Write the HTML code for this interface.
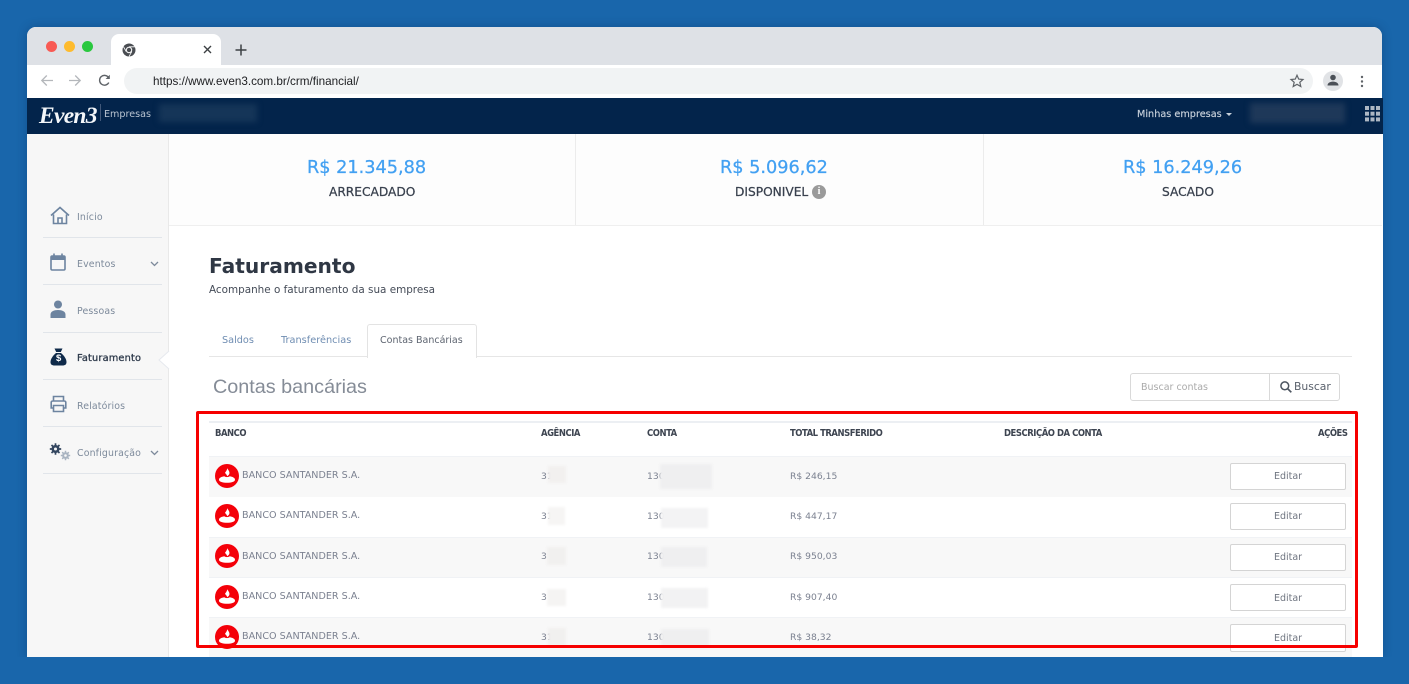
<!DOCTYPE html>
<html lang="pt-BR">
<head>
<meta charset="utf-8">
<title>Even3 - Faturamento</title>
<style>
html,body{margin:0;padding:0;width:1409px;height:684px;overflow:hidden;background:#1966ab;font-family:"DejaVu Sans","Liberation Sans",sans-serif;}
.a{position:absolute;white-space:nowrap;line-height:1;}
.b{position:absolute;}
.side{font-size:9.4px;color:#7d8a9b;letter-spacing:.15px;}
.hd{font-size:9.4px;font-weight:bold;color:#3d4450;letter-spacing:-.45px;font-family:"DejaVu Sans Condensed","DejaVu Sans",sans-serif;}
.cell{font-size:9.2px;color:#7b8190;}
.bank{font-size:9.6px;color:#7b8190;}
.stat{font-size:17.7px;color:#42a0f2;-webkit-text-stroke:.25px #42a0f2;}
.lab{font-size:12.2px;color:#39414e;-webkit-text-stroke:.25px #39414e;}
.btn{position:absolute;left:1230px;width:114px;height:25px;background:#fff;border:1px solid #d4d4d4;border-radius:2px;font-size:9.5px;color:#6f7580;text-align:center;line-height:26px;}
.blur{position:absolute;filter:blur(1.2px);}
.line{position:absolute;left:43px;width:119px;height:1px;background:#e1e5ea;}
svg{position:absolute;overflow:visible;}
</style>
</head>
<body>
<!-- window -->
<div class="b" style="left:27px;top:27px;width:1355px;height:630px;background:#fff;border-radius:9px 9px 0 0;box-shadow:0 0 10px rgba(0,30,70,.28);overflow:hidden;"></div>
<div class="b" style="left:27px;top:27px;width:1355px;height:38px;background:#dee1e6;border-radius:9px 9px 0 0;"></div>
<div class="b" style="left:46px;top:41px;width:11px;height:11px;border-radius:50%;background:#f85a54;"></div>
<div class="b" style="left:64px;top:41px;width:11px;height:11px;border-radius:50%;background:#febb2e;"></div>
<div class="b" style="left:82px;top:41px;width:11px;height:11px;border-radius:50%;background:#2ac83f;"></div>
<!-- tab -->
<div class="b" style="left:111px;top:34px;width:110px;height:31px;background:#fff;border-radius:8px 8px 0 0;"></div>
<svg style="left:122px;top:43px" width="14" height="14" viewBox="0 0 14 14"><circle cx="7" cy="7" r="6.5" fill="#4a4d52"/><circle cx="7" cy="7" r="3.2" fill="#fff"/><circle cx="7" cy="7" r="2.2" fill="#4a4d52"/><path d="M7 3.8H13M4.2 8.6L1.4 3.6M9.8 8.6L7 13.4" stroke="#fff" stroke-width=".8"/></svg>
<svg style="left:203px;top:45px" width="9" height="9" viewBox="0 0 9 9"><path d="M1 1L8 8M8 1L1 8" stroke="#3c4043" stroke-width="1.4"/></svg>
<svg style="left:235px;top:44px" width="12" height="12" viewBox="0 0 12 12"><path d="M6 .5V11.5M.5 6H11.5" stroke="#3c4043" stroke-width="1.5"/></svg>
<!-- toolbar -->
<svg style="left:40px;top:74px" width="14" height="13" viewBox="0 0 14 13"><path d="M13 6.5H2M6.8 1.5L1.8 6.5L6.8 11.5" fill="none" stroke="#b4b7bb" stroke-width="1.3"/></svg>
<svg style="left:68px;top:74px" width="14" height="13" viewBox="0 0 14 13"><path d="M1 6.5H12M7.2 1.5L12.2 6.5L7.2 11.5" fill="none" stroke="#b4b7bb" stroke-width="1.3"/></svg>
<svg style="left:98px;top:74px" width="13" height="13" viewBox="0 0 13 13"><path d="M10.8 8.6A4.9 4.9 0 1 1 10.6 3.600" fill="none" stroke="#5f6368" stroke-width="1.4"/><path d="M11.8 .8V5H7.6Z" fill="#5f6368"/></svg>
<div class="b" style="left:124px;top:68px;width:1189px;height:26px;background:#f1f3f4;border-radius:13px;"></div>
<div class="a" style="left:153px;top:75px;font:11.7px 'Liberation Sans',sans-serif;color:#202124;">https://www.even3.com.br/crm/financial/</div>
<svg style="left:1290px;top:74px" width="14" height="14" viewBox="0 0 14 14"><path d="M7 1.2L8.7 5.1L13 5.5L9.8 8.3L10.8 12.5L7 10.3L3.2 12.5L4.2 8.3L1 5.5L5.3 5.1Z" fill="none" stroke="#5f6368" stroke-width="1.2"/></svg>
<div class="b" style="left:1323px;top:71px;width:20px;height:20px;border-radius:50%;background:#e1e3e6;"></div>
<svg style="left:1327px;top:74px" width="12" height="13" viewBox="0 0 12 13"><circle cx="6" cy="3.5" r="2.8" fill="#4b5057"/><path d="M.5 11.5C.5 8.6 3.5 7.6 6 7.6S11.5 8.6 11.5 11.5Z" fill="#4b5057"/></svg>
<svg style="left:1360px;top:75px" width="4" height="13" viewBox="0 0 4 13"><circle cx="2" cy="2" r="1.2" fill="#5f6368"/><circle cx="2" cy="6.5" r="1.2" fill="#5f6368"/><circle cx="2" cy="11" r="1.2" fill="#5f6368"/></svg>
<!-- nav -->
<div class="b" style="left:27px;top:98px;width:1356px;height:36px;background:#03244b;"></div>
<div class="a" style="left:39px;top:103px;font:bold italic 23.5px 'Liberation Serif',serif;color:#f4f7fa;letter-spacing:-.7px;">Even3</div>
<div class="b" style="left:100px;top:104px;width:1px;height:17px;background:#41587a;"></div>
<div class="a" style="left:104px;top:110px;font-size:9.6px;color:#b9c4d1;">Empresas</div>
<div class="b" style="left:159px;top:104px;width:98px;height:18px;background:#153558;filter:blur(3px);"></div>
<div class="a" style="left:1137px;top:110px;font-size:9.7px;color:#c7d0da;-webkit-text-stroke:.15px #c7d0da;">Minhas empresas</div>
<div class="b" style="left:1226px;top:113px;width:0;height:0;border-left:3.5px solid transparent;border-right:3.5px solid transparent;border-top:3.5px solid #c7d0da;"></div>
<div class="b" style="left:1250px;top:103px;width:95px;height:20px;background:#1e3859;filter:blur(3px);"></div>
<svg style="left:1365px;top:106px" width="15" height="16" viewBox="0 0 15 16" fill="#aeb8c4"><rect x="0" y="0" width="4" height="4"/><rect x="5.5" y="0" width="4" height="4"/><rect x="11" y="0" width="4" height="4"/><rect x="0" y="5.7" width="4" height="4"/><rect x="5.5" y="5.7" width="4" height="4"/><rect x="11" y="5.7" width="4" height="4"/><rect x="0" y="11.4" width="4" height="4"/><rect x="5.5" y="11.4" width="4" height="4"/><rect x="11" y="11.4" width="4" height="4"/></svg>
<!-- sidebar -->
<div class="b" style="left:27px;top:134px;width:141px;height:523px;background:#f7f7f7;border-right:1px solid #e9e9e9;"></div>
<svg style="left:50px;top:206px" width="20" height="19" viewBox="0 0 20 19"><path d="M1 9.5L10 1.5L19 9.5" fill="none" stroke="#6d84a0" stroke-width="1.6"/><path d="M3.5 8.5V17.500H16.500V8.500M8 17.500V12H12V17.500" fill="none" stroke="#6d84a0" stroke-width="1.6"/></svg>
<div class="a side" style="left:77px;top:213px;">Início</div>
<div class="line" style="top:237px;"></div>
<svg style="left:50px;top:253px" width="16" height="18" viewBox="0 0 16 18"><rect x="1" y="3" width="14" height="14" rx="1.200" fill="none" stroke="#6d84a0" stroke-width="1.6"/><rect x="1" y="3" width="14" height="4" fill="#6d84a0"/><path d="M4 .5V3M12 .5V3" stroke="#6d84a0" stroke-width="1.6"/></svg>
<div class="a side" style="left:77px;top:260px;">Eventos</div>
<svg style="left:150px;top:261px" width="9" height="6" viewBox="0 0 9 6"><path d="M1 1L4.500 4.500L8 1" fill="none" stroke="#7d8a9b" stroke-width="1.3"/></svg>
<div class="line" style="top:284px;"></div>
<svg style="left:50px;top:300px" width="16" height="18" viewBox="0 0 16 18"><circle cx="8" cy="4.500" r="4" fill="#6d84a0"/><path d="M.5 18V14.500C.5 11.500 4 10 8 10S15.500 11.500 15.500 14.500V18Z" fill="#6d84a0"/></svg>
<div class="a side" style="left:77px;top:307px;">Pessoas</div>
<div class="line" style="top:332px;"></div>
<svg style="left:50px;top:348px" width="17" height="18" viewBox="0 0 17 18"><path d="M4.500 .5H12.500L10.800 4H6.200Z" fill="#0f2a4a"/><path d="M6 5H11C14 7.500 16.500 11 16.500 14C16.500 16.500 15 17.500 12.500 17.500H4.500C2 17.500 .5 16.500 .5 14C.5 11 3 7.500 6 5Z" fill="#0f2a4a"/></svg>
<div class="a" style="left:56px;top:353px;font:bold 9.500px 'Liberation Sans',sans-serif;color:#fff;">$</div>
<div class="a side" style="left:77px;top:354px;color:#2e3a4b;font-size:9.8px;-webkit-text-stroke:.3px #2e3a4b;">Faturamento</div>
<svg style="left:158px;top:351px" width="11" height="18" viewBox="0 0 11 18"><path d="M11 0L1 9L11 18Z" fill="#fff"/><path d="M11 0L1 9L11 18" fill="none" stroke="#e6e9ee" stroke-width="1"/></svg>
<div class="line" style="top:379px;"></div>
<svg style="left:50px;top:395px" width="17" height="18" viewBox="0 0 17 18"><path d="M3.500 6V1.500H13.500V6M3.500 13H1.200V7.500C1.200 6.500 2 6 3 6H14C15 6 15.800 6.500 15.800 7.500V13H13.500M3.500 10.500H13.500V16.500H3.500Z" fill="none" stroke="#6d84a0" stroke-width="1.600"/></svg>
<div class="a side" style="left:77px;top:402px;">Relatórios</div>
<div class="line" style="top:426px;"></div>
<svg style="left:50px;top:443px" width="22" height="19" viewBox="0 0 22 19"><path d="M5.500 .3V11.700M-.2 6H11.200M1.500 2L9.500 10M9.500 2L1.500 10" stroke="#33465f" stroke-width="1.700"/><circle cx="5.500" cy="6" r="4" fill="#33465f"/><circle cx="5.500" cy="6" r="1.500" fill="#f7f7f7"/><path d="M15.500 7.800V17.200M10.800 12.500H20.200M12.200 9.200L18.800 15.800M18.800 9.200L12.200 15.800" stroke="#a9b4c1" stroke-width="1.500"/><circle cx="15.500" cy="12.500" r="3.300" fill="#a9b4c1"/><circle cx="15.500" cy="12.500" r="1.300" fill="#f7f7f7"/></svg>
<div class="a side" style="left:77px;top:449px;">Configuração</div>
<svg style="left:150px;top:450px" width="9" height="6" viewBox="0 0 9 6"><path d="M1 1L4.500 4.500L8 1" fill="none" stroke="#7d8a9b" stroke-width="1.300"/></svg>
<div class="line" style="top:473px;"></div>
<!-- stats -->
<div class="b" style="left:169px;top:134px;width:1214px;height:91px;background:#fdfdfd;border-bottom:1px solid #efefef;"></div>
<div class="b" style="left:575px;top:134px;width:1px;height:91px;background:#ececec;"></div>
<div class="b" style="left:983px;top:134px;width:1px;height:91px;background:#ececec;"></div>
<div class="b" style="left:1382px;top:134px;width:1px;height:523px;background:#fff;"></div>
<div class="a stat" style="left:307px;top:160px;">R$ 21.345,88</div>
<div class="a lab" style="left:329px;top:186px;">ARRECADADO</div>
<div class="a stat" style="left:720px;top:160px;">R$ 5.096,62</div>
<div class="a lab" style="left:735px;top:186px;">DISPONIVEL</div>
<div class="b" style="left:812px;top:185px;width:14px;height:14px;border-radius:50%;background:#9a9a9a;color:#fff;font:bold 10px/14px 'Liberation Serif',serif;text-align:center;">i</div>
<div class="a stat" style="left:1123px;top:160px;">R$ 16.249,26</div>
<div class="a lab" style="left:1162px;top:186px;">SACADO</div>
<!-- page title -->
<div class="a" style="left:209px;top:256px;font-size:20.2px;font-weight:bold;color:#2f3744;">Faturamento</div>
<div class="a" style="left:209px;top:285px;font-size:10.4px;color:#444b57;">Acompanhe o faturamento da sua empresa</div>
<!-- tabs -->
<div class="b" style="left:209px;top:356px;width:1143px;height:1px;background:#e6e6e6;"></div>
<div class="a" style="left:222px;top:336px;font-size:9.7px;color:#6f8db2;">Saldos</div>
<div class="a" style="left:281px;top:336px;font-size:9.75px;color:#6f8db2;">Transferências</div>
<div class="b" style="left:367px;top:324px;width:108px;height:33px;background:#fff;border:1px solid #e3e3e3;border-bottom:0;border-radius:3px 3px 0 0;"></div>
<div class="a" style="left:380px;top:336px;font-size:9.5px;color:#5d6470;">Contas Bancárias</div>
<div class="a" style="left:213px;top:376px;font:19.8px 'Liberation Sans',sans-serif;color:#858c97;">Contas bancárias</div>
<!-- search -->
<div class="b" style="left:1130px;top:373px;width:208px;height:26px;border:1px solid #d9d9d9;border-radius:3px;background:#fff;"></div>
<div class="b" style="left:1269px;top:373px;width:1px;height:28px;background:#d9d9d9;"></div>
<div class="a" style="left:1141px;top:383px;font-size:9.5px;color:#aaa;">Buscar contas</div>
<svg style="left:1280px;top:381px" width="12" height="12" viewBox="0 0 12 12"><circle cx="4.800" cy="4.800" r="3.900" fill="none" stroke="#4d5560" stroke-width="1.500"/><path d="M7.800 7.800L11.300 11.300" stroke="#4d5560" stroke-width="1.700"/></svg>
<div class="a" style="left:1294px;top:382px;font-size:10.8px;color:#5a616c;">Buscar</div>
<!-- table -->
<div class="b" style="left:209px;top:421px;width:1143px;height:2px;background:#eceff3;"></div>
<div class="a hd" style="left:215px;top:429px;">BANCO</div>
<div class="a hd" style="left:541px;top:429px;">AGÊNCIA</div>
<div class="a hd" style="left:647px;top:429px;">CONTA</div>
<div class="a hd" style="left:790px;top:429px;">TOTAL TRANSFERIDO</div>
<div class="a hd" style="left:1004px;top:429px;">DESCRIÇÃO DA CONTA</div>
<div class="a hd" style="left:1318px;top:429px;">AÇÕES</div>
<div class="b" style="left:209px;top:456px;width:1143px;height:41px;background:#f8f8f8;border-top:1px solid #f0f2f5;box-sizing:border-box;"></div>
<div class="b" style="left:209px;top:537px;width:1143px;height:40px;background:#f8f8f8;border-top:1px solid #f0f2f5;box-sizing:border-box;"></div>
<div class="b" style="left:209px;top:577px;width:1143px;height:1px;background:#f0f2f5;"></div>
<div class="b" style="left:209px;top:617px;width:1143px;height:40px;background:#f8f8f8;border-top:1px solid #f0f2f5;box-sizing:border-box;"></div>
<!-- row 1 -->
<svg style="left:215px;top:464px" width="24" height="24" viewBox="0 0 24 24"><circle cx="12" cy="12" r="12" fill="#f40009"/><path d="M4 15.800C4 13.800 6.500 12.800 9.300 12.300C10.500 13.400 13.500 13.400 14.700 12.300C17.500 12.800 20 13.800 20 15.800C20 17.800 16 18.800 12 18.800S4 17.800 4 15.800Z" fill="#fff"/><path d="M12.300 4.200C13.500 6.500 15 7.700 14.300 10C14 11 13 11.600 12 12.300C12.300 10.800 10.700 10 10 8.700C10.800 7.700 12 6.200 12.300 4.200Z" fill="#fff"/></svg>
<div class="a bank" style="left:242px;top:471px;">BANCO SANTANDER S.A.</div>
<div class="a cell" style="left:541px;top:472px;">31</div>
<div class="blur" style="left:548px;top:466px;width:18px;height:17px;background:#f2f0ef;"></div>
<div class="a cell" style="left:647px;top:472px;">130</div>
<div class="blur" style="left:660px;top:464px;width:52px;height:25px;background:#efeff0;"></div>
<div class="a cell" style="left:790px;top:472px;">R$ 246,15</div>
<div class="btn" style="top:463px;">Editar</div>
<!-- row 2 -->
<svg style="left:215px;top:504px" width="24" height="24" viewBox="0 0 24 24"><circle cx="12" cy="12" r="12" fill="#f40009"/><path d="M4 15.800C4 13.800 6.500 12.800 9.300 12.300C10.500 13.400 13.500 13.400 14.700 12.300C17.500 12.800 20 13.800 20 15.800C20 17.800 16 18.800 12 18.800S4 17.800 4 15.800Z" fill="#fff"/><path d="M12.300 4.200C13.500 6.500 15 7.700 14.300 10C14 11 13 11.600 12 12.300C12.300 10.800 10.700 10 10 8.700C10.800 7.700 12 6.200 12.300 4.200Z" fill="#fff"/></svg>
<div class="a bank" style="left:242px;top:511px;">BANCO SANTANDER S.A.</div>
<div class="a cell" style="left:541px;top:512px;">31</div>
<div class="blur" style="left:548px;top:507px;width:17px;height:18px;background:#f6f5f4;"></div>
<div class="a cell" style="left:647px;top:512px;">130</div>
<div class="blur" style="left:661px;top:508px;width:47px;height:20px;background:#f3f3f4;"></div>
<div class="a cell" style="left:790px;top:512px;">R$ 447,17</div>
<div class="btn" style="top:503px;">Editar</div>
<!-- row 3 -->
<svg style="left:215px;top:544px" width="24" height="24" viewBox="0 0 24 24"><circle cx="12" cy="12" r="12" fill="#f40009"/><path d="M4 15.800C4 13.800 6.500 12.800 9.300 12.300C10.500 13.400 13.500 13.400 14.700 12.300C17.500 12.800 20 13.800 20 15.800C20 17.800 16 18.800 12 18.800S4 17.800 4 15.800Z" fill="#fff"/><path d="M12.300 4.200C13.500 6.500 15 7.700 14.300 10C14 11 13 11.600 12 12.300C12.300 10.800 10.700 10 10 8.700C10.800 7.700 12 6.200 12.300 4.200Z" fill="#fff"/></svg>
<div class="a bank" style="left:242px;top:552px;">BANCO SANTANDER S.A.</div>
<div class="a cell" style="left:541px;top:552px;">3</div>
<div class="blur" style="left:547px;top:547px;width:19px;height:18px;background:#f1f0ef;"></div>
<div class="a cell" style="left:647px;top:552px;">130</div>
<div class="blur" style="left:661px;top:547px;width:46px;height:20px;background:#efeff0;"></div>
<div class="a cell" style="left:790px;top:552px;">R$ 950,03</div>
<div class="btn" style="top:544px;">Editar</div>
<!-- row 4 -->
<svg style="left:215px;top:585px" width="24" height="24" viewBox="0 0 24 24"><circle cx="12" cy="12" r="12" fill="#f40009"/><path d="M4 15.800C4 13.800 6.500 12.800 9.300 12.300C10.500 13.400 13.500 13.400 14.700 12.300C17.500 12.800 20 13.800 20 15.800C20 17.800 16 18.800 12 18.800S4 17.800 4 15.800Z" fill="#fff"/><path d="M12.300 4.200C13.500 6.500 15 7.700 14.300 10C14 11 13 11.600 12 12.300C12.300 10.800 10.700 10 10 8.700C10.800 7.700 12 6.200 12.300 4.200Z" fill="#fff"/></svg>
<div class="a bank" style="left:242px;top:592px;">BANCO SANTANDER S.A.</div>
<div class="a cell" style="left:541px;top:593px;">3</div>
<div class="blur" style="left:547px;top:589px;width:19px;height:17px;background:#f5f4f3;"></div>
<div class="a cell" style="left:647px;top:593px;">130</div>
<div class="blur" style="left:661px;top:588px;width:47px;height:20px;background:#f2f2f3;"></div>
<div class="a cell" style="left:790px;top:593px;">R$ 907,40</div>
<div class="btn" style="top:584px;line-height:27px;">Editar</div>
<!-- row 5 -->
<svg style="left:215px;top:625px" width="24" height="24" viewBox="0 0 24 24"><circle cx="12" cy="12" r="12" fill="#f40009"/><path d="M4 15.800C4 13.800 6.500 12.800 9.300 12.300C10.500 13.400 13.500 13.400 14.700 12.300C17.500 12.800 20 13.800 20 15.800C20 17.800 16 18.800 12 18.800S4 17.800 4 15.800Z" fill="#fff"/><path d="M12.300 4.200C13.500 6.500 15 7.700 14.300 10C14 11 13 11.600 12 12.300C12.300 10.800 10.700 10 10 8.700C10.800 7.700 12 6.200 12.300 4.200Z" fill="#fff"/></svg>
<div class="a bank" style="left:242px;top:632px;">BANCO SANTANDER S.A.</div>
<div class="a cell" style="left:541px;top:633px;">31</div>
<div class="blur" style="left:548px;top:628px;width:18px;height:18px;background:#f1f0ef;"></div>
<div class="a cell" style="left:647px;top:633px;">130</div>
<div class="blur" style="left:661px;top:629px;width:48px;height:19px;background:#efeff0;"></div>
<div class="a cell" style="left:790px;top:633px;">R$ 38,32</div>
<div class="btn" style="top:624px;height:26px;line-height:27px;">Editar</div>
<!-- bottom window clip -->
<div class="b" style="left:0;top:657px;width:1409px;height:27px;background:#1966ab;"></div>
<!-- red highlight -->
<div class="b" style="left:196px;top:411px;width:1156px;height:231px;border:3px solid #f60000;border-radius:2px;"></div>
</body>
</html>
